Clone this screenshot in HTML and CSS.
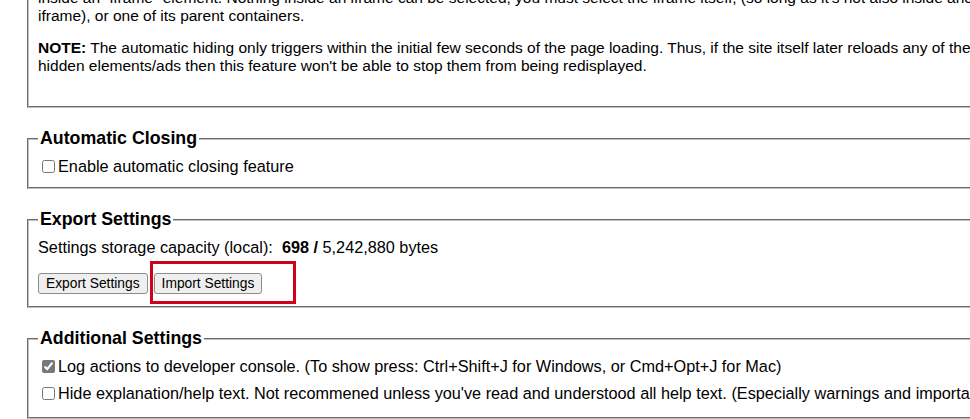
FILE: index.html
```html
<!DOCTYPE html>
<html lang="en">
<head>
<meta charset="utf-8">
<title>Settings</title>
<link rel="stylesheet" href="styles.css">
</head>
<body>
<main class="page">
  <fieldset class="group group-cut">
    <p class="help">inside an "iframe" element. Nothing inside an iframe can be selected, you must select the iframe itself, (so long as it's not also inside another<br>iframe), or one of its parent containers.</p>
    <p class="help"><b>NOTE:</b> The automatic hiding only triggers within the initial few seconds of the page loading. Thus, if the site itself later reloads any of the<br>hidden elements/ads then this feature won't be able to stop them from being redisplayed.</p>
  </fieldset>

  <fieldset class="group group-closing">
    <legend class="group-title">Automatic Closing</legend>
    <label class="row"><input type="checkbox" class="check">Enable automatic closing feature</label>
  </fieldset>

  <fieldset class="group group-export">
    <legend class="group-title">Export Settings</legend>
    <div class="capacity">Settings storage capacity (local):&nbsp; <b>698 /</b> 5,242,880 bytes</div>
    <div class="buttons">
      <button type="button" class="btn">Export Settings</button>
      <button type="button" class="btn">Import Settings</button>
    </div>
  </fieldset>

  <fieldset class="group group-additional">
    <legend class="group-title">Additional Settings</legend>
    <label class="row"><input type="checkbox" class="check" checked>Log actions to developer console. (To show press: Ctrl+Shift+J for Windows, or Cmd+Opt+J for Mac)</label>
    <label class="row"><input type="checkbox" class="check">Hide explanation/help text. Not recommened unless you've read and understood all help text. (Especially warnings and important notes.)</label>
  </fieldset>
</main>
<div class="highlight" aria-hidden="true"></div>
</body>
</html>
```

FILE: styles.css
```css
html, body {
  margin: 0;
  padding: 0;
  overflow: hidden;
  background: #ffffff;
}

body {
  position: relative;
  width: 970px;
  height: 419px;
  font-family: "Liberation Sans", Arial, Helvetica, sans-serif;
  font-size: 16.25px;
  line-height: 18px;
  color: #000000;
}

.page {
  display: flex;
  flex-direction: column;
  gap: 20px;
  padding-left: 27px;
  width: 1200px;
}

.group {
  margin: 0;
  min-width: 0;
  border: 2px groove #c0c0c0;
  padding: 8px 9px 12px;
  white-space: nowrap;
}

.group-cut {
  margin-top: -11px;
  border-top: 0;
  padding-top: 0;
  padding-bottom: 31px;
}

.group-export {
  padding-top: 8px;
  padding-bottom: 12px;
}

.group-additional {
  padding-top: 8px;
  padding-bottom: 15px;
}

.group-title {
  padding: 0 2px;
  font-size: 17.8px;
  line-height: 21px;
  font-weight: bold;
}

.help {
  margin: 0 0 14px;
  font-size: 15.5px;
}

.help:last-child {
  margin-bottom: 0;
}

.row {
  display: flex;
  align-items: center;
  height: 18px;
}

.row + .row {
  margin-top: 9px;
}

.check {
  width: 13px;
  height: 13px;
  margin: 0 3px 0 4px;
  accent-color: #787878;
}

.capacity {
  height: 18px;
}

.buttons {
  display: flex;
  gap: 6px;
  margin-top: 17px;
}

.btn {
  margin: 0;
  padding: 2px 7px;
  font-family: "Liberation Sans", Arial, Helvetica, sans-serif;
  font-size: 13.8px;
  line-height: 15px;
  color: #000000;
  background: #efefef;
  border: 1px solid #8d8d8d;
  border-radius: 3px;
}

.highlight {
  position: absolute;
  left: 150px;
  top: 261px;
  width: 140px;
  height: 37px;
  border: 3px solid #d0021b;
}
```
